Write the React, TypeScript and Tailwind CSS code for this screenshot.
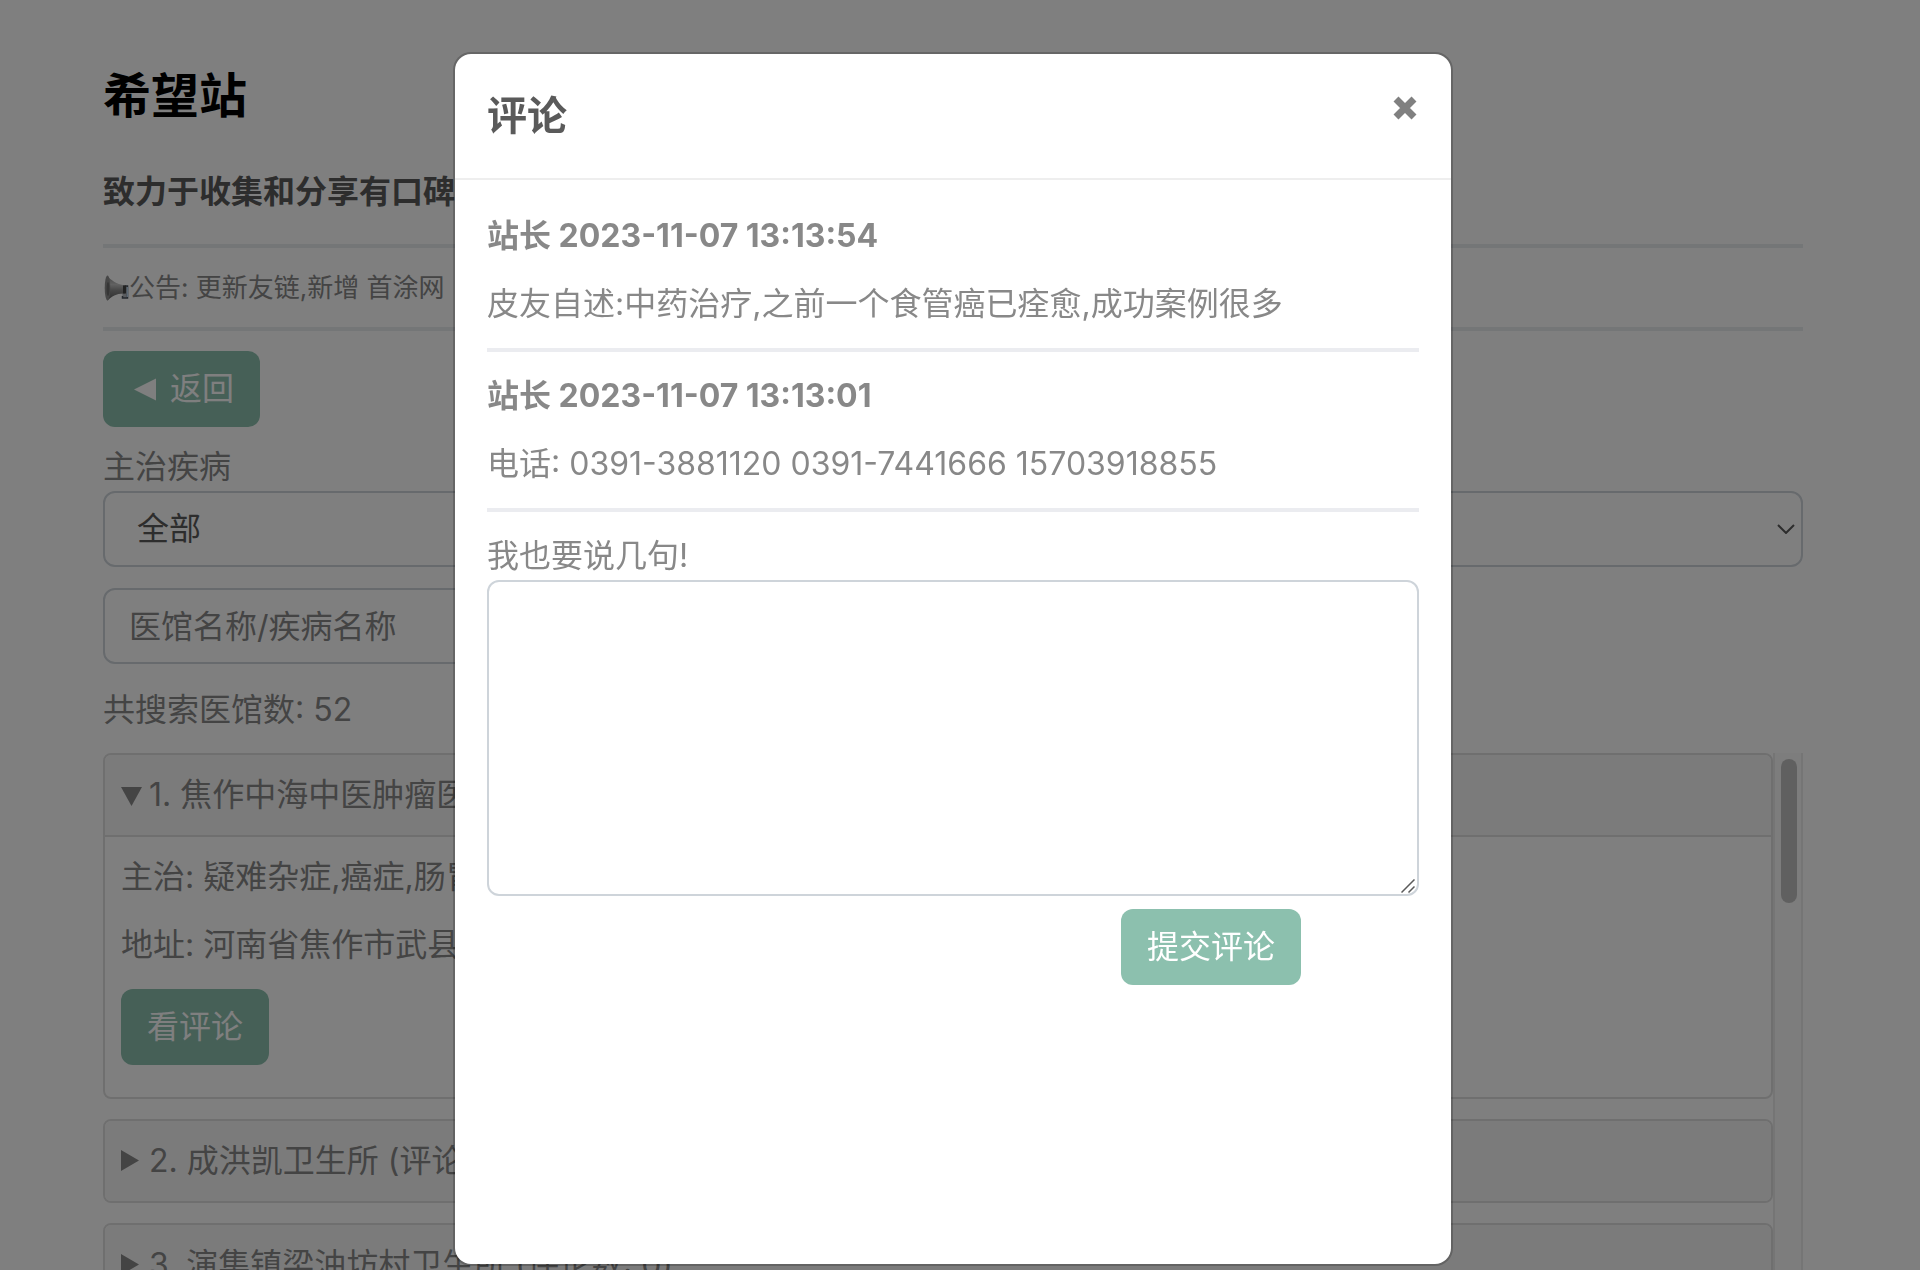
import React, { useState } from 'react';

const BUTTON =
  'rounded-xl bg-[#8cc0ae] px-[26px] py-[14px] text-[32px] leading-[48px] text-white';
const FIELD =
  'block h-[76px] rounded-xl border-2 border-[#ced4da] bg-white text-[32px] leading-[48px]';

const clinics = [
  {
    name: '焦作中海中医肿瘤医',
    treats: '疑难杂症,癌症,肠胃',
    address: '河南省焦作市武县',
  },
  { name: '成洪凯卫生所 (评论数: 0)' },
  { name: '演集镇梁油坊村卫生所 (评论数: 0)' },
];

const comments = [
  {
    time: '2023-11-07 13:13:54',
    text: '皮友自述:中药治疗,之前一个食管癌已痊愈,成功案例很多',
  },
  {
    time: '2023-11-07 13:13:01',
    text: '电话: 0391-3881120 0391-7441666 15703918855',
  },
];

function HornIcon() {
  return (
    <svg viewBox="0 0 26 28" className="h-7 w-[26px] shrink-0" aria-hidden="true">
      <defs>
        <linearGradient id="horn" x1="0" y1="0" x2="0" y2="1">
          <stop offset="0" stopColor="#8c8c8c" />
          <stop offset="0.35" stopColor="#c4c4c4" />
          <stop offset="0.6" stopColor="#8a8a8a" />
          <stop offset="1" stopColor="#5c5c5c" />
        </linearGradient>
      </defs>
      <path d="M19 12h5.500v12h-5v-2" fill="#b4b9bf" stroke="#4a525c" strokeWidth="1.500" />
      <path d="M24.500 13v10" stroke="#b9d3ea" strokeWidth="1.500" />
      <path d="M4 2C8 6 13 10 22 11.500V19.500C14 19 9 22 4.500 26.500Z" fill="url(#horn)" />
      <ellipse cx="4.500" cy="14" rx="2.800" ry="12.500" fill="#8f8f8f" />
      <ellipse cx="5" cy="15" rx="1.500" ry="7" fill="#6c6c6c" />
      <path d="M20 11.500h3v8h-3z" fill="#444444" />
    </svg>
  );
}

function Marker({ open }: { open: boolean }) {
  return (
    <svg viewBox="0 0 28 24" className="h-6 w-7 shrink-0" aria-hidden="true">
      <path d={open ? 'M0 4H21L10.500 23Z' : 'M0 1V22L18 11.500Z'} fill="#888888" />
    </svg>
  );
}

function Clinic({ index, clinic }: { index: number; clinic: (typeof clinics)[number] }) {
  const [open, setOpen] = useState(!!clinic.treats);

  return (
    <details
      open={open}
      onToggle={(e) => setOpen(e.currentTarget.open)}
      className="overflow-hidden rounded-lg border-2 border-[#dfdfdf]"
    >
      <summary className="flex cursor-pointer list-none items-center bg-[#f7f7f7] px-4 py-4">
        <Marker open={open} />
        <span className="whitespace-nowrap">
          {index}. {clinic.name}
        </span>
      </summary>
      {clinic.treats && (
        <div className="flex flex-col items-start gap-5 border-t-2 border-[#dfdfdf] px-4 pt-4 pb-8">
          <p>主治: {clinic.treats}</p>
          <p>地址: {clinic.address}</p>
          <button type="button" className={BUTTON}>
            看评论
          </button>
        </div>
      )}
    </details>
  );
}

function CommentDialog() {
  return (
    <div className="fixed inset-0 flex justify-center bg-black/50 pt-[52px] pr-[14px] pb-1">
      <div
        role="dialog"
        aria-labelledby="comment-title"
        className="flex w-full max-w-[1000px] flex-col rounded-[18px] border-2 border-black/20 bg-white bg-clip-padding"
      >
        <div className="flex items-start justify-between border-b-2 border-[#eeeeee] p-8">
          <h2 id="comment-title" className="text-[40px] leading-[60px] font-bold text-[#5a5a5a]">
            评论
          </h2>
          <button type="button" aria-label="关闭" className="mt-2 p-0.5">
            <svg viewBox="0 0 24 24" className="size-6">
              <path d="M3 3 21 21M21 3 3 21" stroke="#808080" strokeWidth="7" />
            </svg>
          </button>
        </div>
        <div className="p-8">
          {comments.map((comment) => (
            <div key={comment.time} className="mb-5 flex flex-col gap-5 border-b-4 border-[#ebecf0] pb-5">
              <p className="font-bold">站长 {comment.time}</p>
              <p>{comment.text}</p>
            </div>
          ))}
          <label htmlFor="comment" className="block">
            我也要说几句!
          </label>
          <div className="relative">
            <textarea
              id="comment"
              className="block h-[316px] w-full resize-none rounded-xl border-2 border-[#ced4da] px-6 py-3"
            />
            <svg
              viewBox="0 0 14 14"
              className="pointer-events-none absolute right-1 bottom-[3px] size-3.5"
              aria-hidden="true"
            >
              <path d="M0.500 13.500 13.500 0.500M7.500 13.500 13.500 7.500" stroke="#5a5a5a" strokeWidth="1.500" />
            </svg>
          </div>
          <div className="mt-[13px] flex justify-end pr-[118px]">
            <button type="button" className={BUTTON}>
              提交评论
            </button>
          </div>
        </div>
      </div>
    </div>
  );
}

export default function App() {
  return (
    <div className="h-screen overflow-hidden bg-white font-[Inter,'Noto_Sans_CJK_SC',sans-serif] text-[32px] leading-[48px] text-[#888888]">
      <div className="pt-[60px] pr-[117px] pl-[103px]">
        <h1 className="text-[48px] leading-[72px] font-bold text-black">希望站</h1>
        <h2 className="mt-9 pb-7 font-bold text-[#5a5a5a]">致力于收集和分享有口碑</h2>
        <div className="flex items-center border-y-4 border-[#e9ecef] py-5 text-[26px] leading-[39px]">
          <HornIcon />
          公告: 更新友链,新增 首涂网
        </div>
        <button type="button" className={`${BUTTON} mt-5 flex items-center`}>
          <svg viewBox="0 0 41 24" className="h-6 w-[41px]" aria-hidden="true">
            <path d="M5 12.500 27 1.500V23.500Z" fill="#ffffff" />
          </svg>
          返回
        </button>

        <label htmlFor="disease" className="mt-4 block">
          主治疾病
        </label>
        <div className="relative">
          <select id="disease" className={`${FIELD} w-full appearance-none px-8 text-[#5a5a5a]`}>
            <option>全部</option>
          </select>
          <svg
            viewBox="0 0 18 10"
            className="pointer-events-none absolute top-[33px] right-2 h-2.5 w-[18px]"
            aria-hidden="true"
          >
            <path d="M1 1 9 9 17 1" fill="none" stroke="#5a5a5a" strokeWidth="2" />
          </svg>
        </div>
        <input
          type="text"
          aria-label="医馆名称/疾病名称"
          placeholder="医馆名称/疾病名称"
          className={`${FIELD} mt-[21px] w-1/2 px-6 placeholder:text-[#888888]`}
        />
        <p className="mt-[22px] mb-[19px]">共搜索医馆数: 52</p>

        <div className="flex">
          <div className="flex min-w-0 flex-1 flex-col gap-5">
            {clinics.map((clinic, i) => (
              <Clinic key={clinic.name} index={i + 1} clinic={clinic} />
            ))}
          </div>
          <div className="w-[30px] border-x-2 border-[#ebebeb] bg-[#fafafa] pt-1.5 pr-1 pl-1.5">
            <div className="h-36 rounded-full bg-[#c1c1c1]" />
          </div>
        </div>
      </div>
      <CommentDialog />
    </div>
  );
}
